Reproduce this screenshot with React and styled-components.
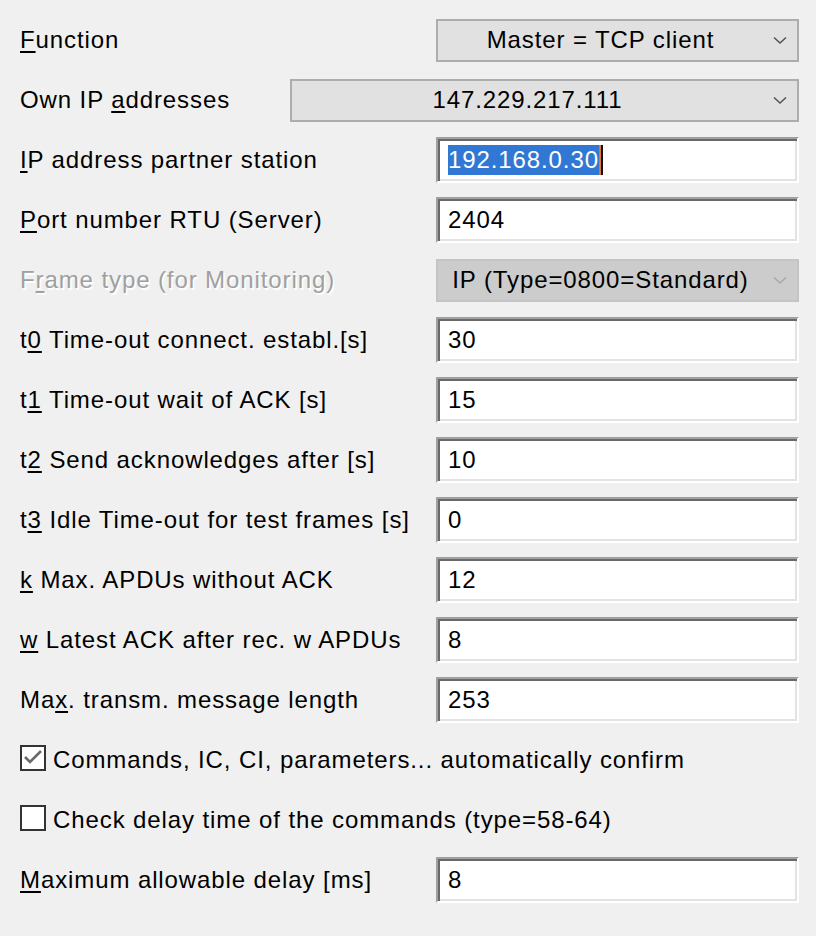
import React from 'react';
import styled, { createGlobalStyle } from 'styled-components';

const GlobalStyle = createGlobalStyle`
  html, body {
    margin: 0;
    padding: 0;
    background: #f0f0f0;
  }
  body {
    font-family: "Liberation Sans", Arial, sans-serif;
    font-size: 24px;
    letter-spacing: 0.9px;
    color: #000;
  }
`;

const Dialog = styled.div`
  width: 816px;
  height: 936px;
  box-sizing: border-box;
  padding: 10px 17px 0 20px;
  background: #f0f0f0;
`;

const Row = styled.div`
  display: flex;
  align-items: center;
  justify-content: space-between;
  height: 60px;
`;

const Label = styled.div`
  white-space: nowrap;
  color: ${p => (p.disabled ? '#a0a0a0' : '#000')};
  text-shadow: ${p => (p.disabled ? '1.5px 1.5px 0 #fff' : 'none')};
  u {
    text-decoration-thickness: 2px;
    text-underline-offset: 3px;
  }
`;

const Combo = styled.div`
  box-sizing: border-box;
  width: ${p => p.width || 363}px;
  height: 43px;
  display: flex;
  align-items: center;
  background: ${p => (p.disabled ? '#cccccc' : '#e1e1e1')};
  border: 2px solid ${p => (p.disabled ? '#c4c4c4' : '#adadad')};
  color: #000;
`;

const ComboText = styled.div`
  flex: 1;
  text-align: center;
  white-space: nowrap;
`;

const Arrow = styled.div`
  width: 34px;
  display: flex;
  justify-content: center;
  align-items: center;
`;

const Edit = styled.div`
  box-sizing: border-box;
  width: 363px;
  height: 46px;
  display: flex;
  align-items: center;
  padding-left: 10px;
  background: #fff;
  border: 2px solid;
  border-color: #a0a0a0 #fff #fff #a0a0a0;
  box-shadow: inset 2px 2px 0 #696969, inset -2px -2px 0 #e3e3e3;
  white-space: nowrap;
`;

const Selected = styled.span`
  background: #3078d3;
  color: #fff;
  padding: 1px 0;
  box-shadow: 2px 0 0 #e07a2a, 4px 0 0 #111;
`;

const CheckRow = styled.div`
  display: flex;
  align-items: center;
  gap: 7px;
  height: 60px;
  white-space: nowrap;
`;

const Box = styled.div`
  box-sizing: border-box;
  width: 26px;
  height: 26px;
  margin-top: -4px;
  border: 2px solid #333;
  background: #fff;
  display: flex;
  align-items: center;
  justify-content: center;
`;

const Chevron = ({ color }) => (
  <svg width="14" height="9" viewBox="0 0 14 9">
    <polyline points="1,1.5 7,7 13,1.5" fill="none" stroke={color} strokeWidth="1.6" />
  </svg>
);

const Check = () => (
  <svg width="20" height="18" viewBox="0 0 20 18">
    <polyline points="2,8 7,13 18,2" fill="none" stroke="#6a6a6a" strokeWidth="2.6" />
  </svg>
);

const fields = [
  { label: <>t<u>0</u> Time-out connect. establ.[s]</>, value: '30' },
  { label: <>t<u>1</u> Time-out wait of ACK [s]</>, value: '15' },
  { label: <>t<u>2</u> Send acknowledges after [s]</>, value: '10' },
  { label: <>t<u>3</u> Idle Time-out for test frames [s]</>, value: '0' },
  { label: <><u>k</u> Max. APDUs without ACK</>, value: '12' },
  { label: <><u>w</u> Latest ACK after rec. w APDUs</>, value: '8' },
  { label: <>Ma<u>x</u>. transm. message length</>, value: '253' }
];

function App() {
  return (
    <Dialog>
      <GlobalStyle />
      <Row>
        <Label><u>F</u>unction</Label>
        <Combo>
          <ComboText>Master = TCP client</ComboText>
          <Arrow><Chevron color="#555" /></Arrow>
        </Combo>
      </Row>
      <Row>
        <Label>Own IP <u>a</u>ddresses</Label>
        <Combo width={509}>
          <ComboText>147.229.217.111</ComboText>
          <Arrow><Chevron color="#555" /></Arrow>
        </Combo>
      </Row>
      <Row>
        <Label><u>I</u>P address partner station</Label>
        <Edit><Selected>192.168.0.30</Selected></Edit>
      </Row>
      <Row>
        <Label><u>P</u>ort number RTU (Server)</Label>
        <Edit>2404</Edit>
      </Row>
      <Row>
        <Label disabled>F<u>r</u>ame type (for Monitoring)</Label>
        <Combo disabled>
          <ComboText>IP (Type=0800=Standard)</ComboText>
          <Arrow><Chevron color="#a8a8a8" /></Arrow>
        </Combo>
      </Row>
      {fields.map((f, idx) => (
        <Row key={'f' + idx}>
          <Label>{f.label}</Label>
          <Edit>{f.value}</Edit>
        </Row>
      ))}
      <CheckRow>
        <Box><Check /></Box>
        Commands, IC, CI, parameters... automatically confirm
      </CheckRow>
      <CheckRow>
        <Box />
        Check delay time of the commands (type=58-64)
      </CheckRow>
      <Row>
        <Label><u>M</u>aximum allowable delay [ms]</Label>
        <Edit>8</Edit>
      </Row>
    </Dialog>
  );
}

export default App;
